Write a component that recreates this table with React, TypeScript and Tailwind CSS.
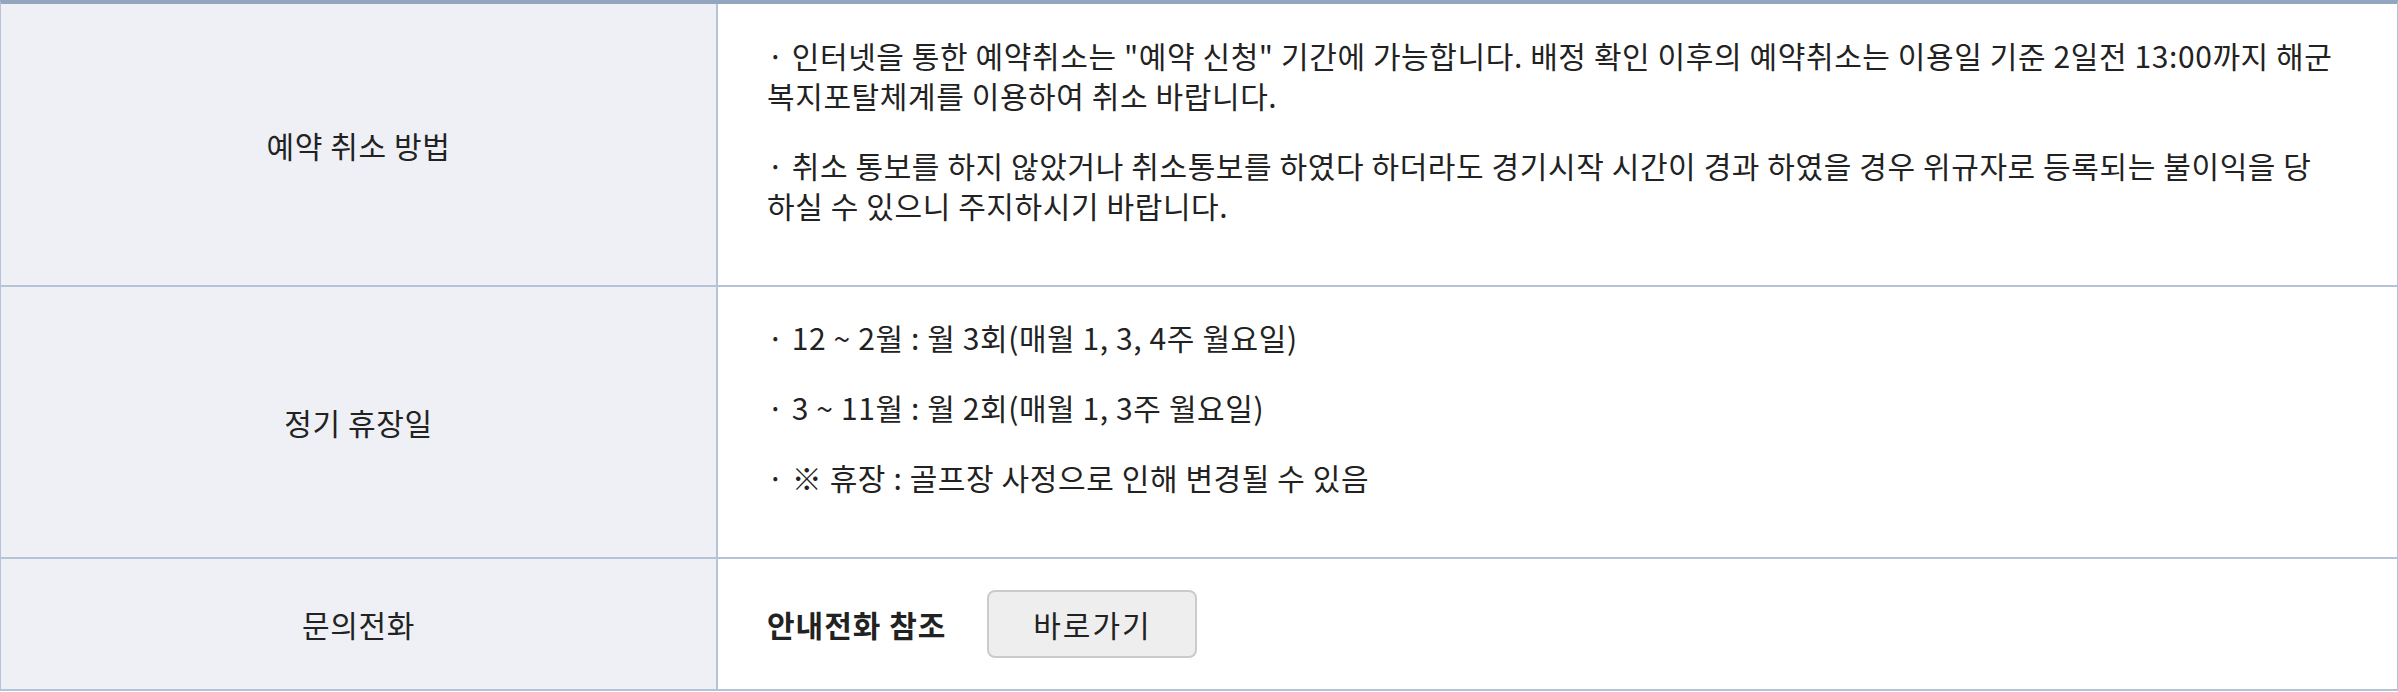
export default function App() {
  const rowLine = "flex border-b-2 border-[#b4c3d8]";
  const label =
    "w-[717px] shrink-0 flex items-center justify-center bg-[#eef0f5] border-r-2 border-[#b4c3d8]";

  return (
    <div className="w-[2398px] bg-white font-['Noto_Sans_CJK_KR',sans-serif] text-[30px] leading-[40px] tracking-[0.6px] text-[#222] break-keep">
      <div className="border-t-4 border-t-[#94a6bd] border-x border-x-[#b4c3d8]">
        {/* 예약 취소 방법 */}
        <div className={rowLine}>
          <div className={label}>예약 취소 방법</div>
          <div className="flex-1 pl-[49px] pr-[36px] pt-[31px] pb-[30px]">
            <p className="mb-[30px]">
              · 인터넷을 통한 예약취소는 "예약 신청" 기간에 가능합니다. 배정 확인 이후의 예약취소는 이용일 기준 2일전
              13:00까지 해군 복지포탈체계를 이용하여 취소 바랍니다.
            </p>
            <p className="mb-[30px]">
              · 취소 통보를 하지 않았거나 취소통보를 하였다 하더라도 경기시작 시간이 경과 하였을 경우 위규자로 등록되는
              불이익을 당 하실 수 있으니 주지하시기 바랍니다.
            </p>
          </div>
        </div>

        {/* 정기 휴장일 */}
        <div className={rowLine}>
          <div className={label}>정기 휴장일</div>
          <div className="flex-1 pl-[49px] pr-[36px] pt-[30px] pb-[30px]">
            <p className="mb-[30px]">· 12 ~ 2월 : 월 3회(매월 1, 3, 4주 월요일)</p>
            <p className="mb-[30px]">· 3 ~ 11월 : 월 2회(매월 1, 3주 월요일)</p>
            <p className="mb-[30px]">· ※ 휴장 : 골프장 사정으로 인해 변경될 수 있음</p>
          </div>
        </div>

        {/* 문의전화 */}
        <div className={rowLine}>
          <div className={label}>문의전화</div>
          <div className="flex-1 flex items-center gap-[41px] pl-[49px] py-[31px]">
            <span className="font-bold tracking-[1px]">안내전화 참조</span>
            <button className="w-[210px] h-[68px] rounded-[8px] border-2 border-[#cbcbcb] bg-[#eeeeee] text-[#222] tracking-[2px]">
              바로가기
            </button>
          </div>
        </div>
      </div>
    </div>
  );
}
